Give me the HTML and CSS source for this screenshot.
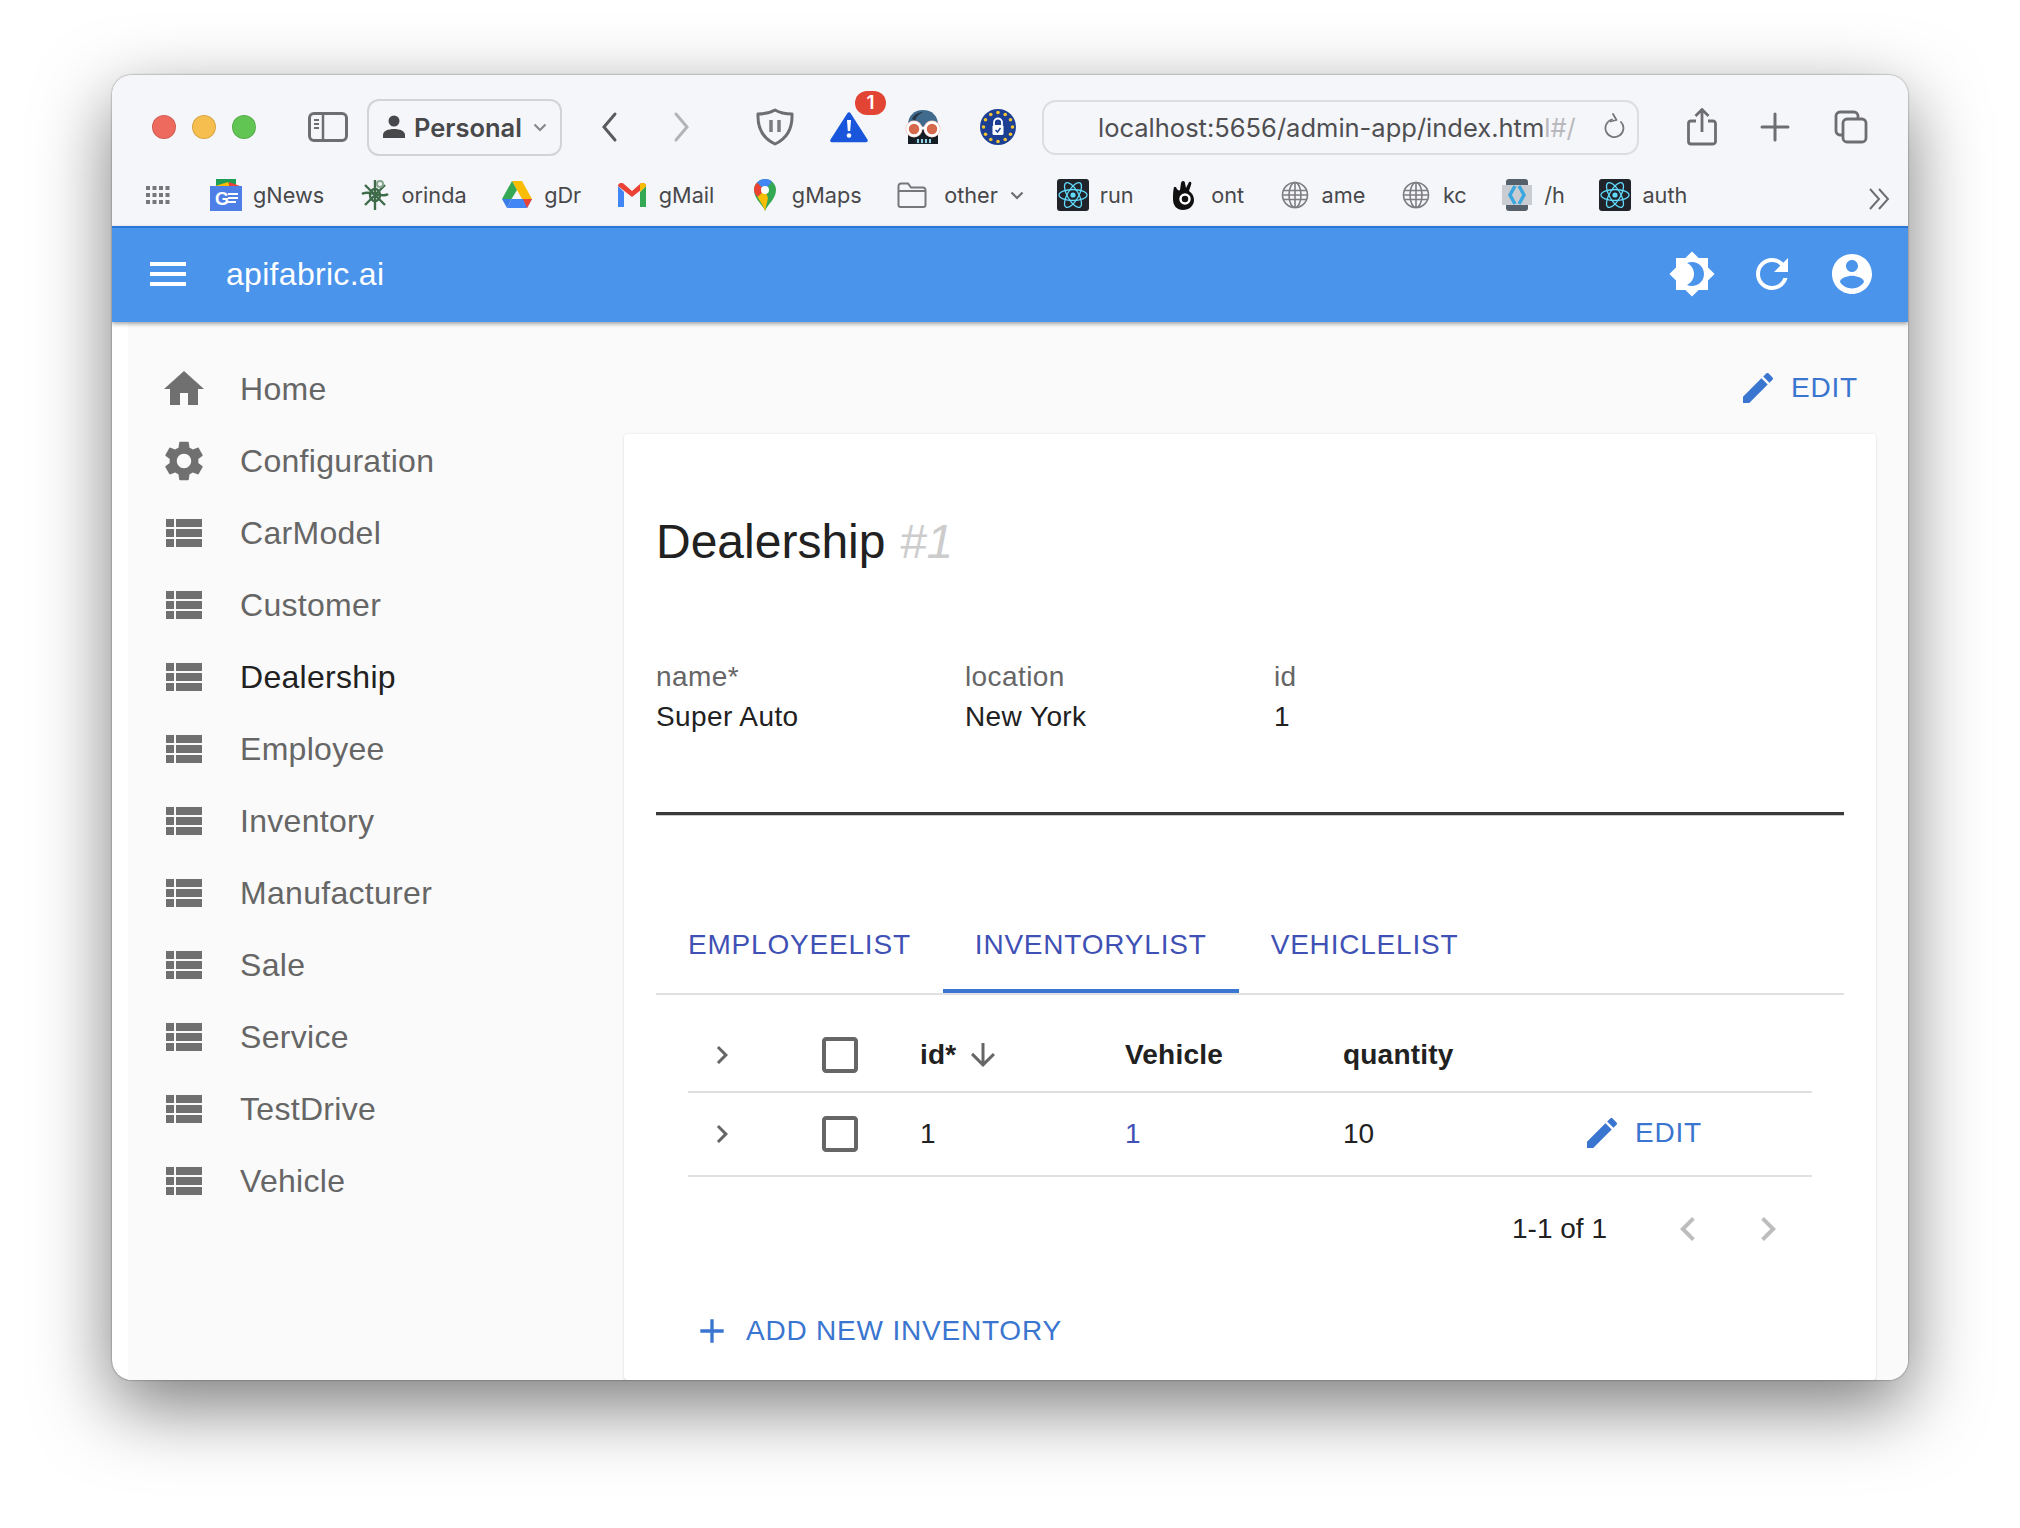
FILE: index.html
```html
<!DOCTYPE html>
<html lang="en">
<head>
  <meta charset="UTF-8" />
  <title>apifabric.ai</title>
  <link rel="stylesheet" href="styles.css">
</head>
<body>

  <svg class="defs" width="0" height="0">
    <symbol id="i-list" viewBox="0 0 24 24"><path d="M3 14h4v-4H3v4zm0 5h4v-4H3v4zM3 9h4V5H3v4zm5 5h13v-4H8v4zm0 5h13v-4H8v4zM8 5v4h13V5H8z"/></symbol>
    <symbol id="i-edit" viewBox="0 0 24 24"><path d="M3 17.25V21h3.75L17.81 9.94l-3.75-3.75L3 17.25zM20.71 7.04c.39-.39.39-1.02 0-1.41l-2.34-2.34c-.39-.39-1.02-.39-1.41 0l-1.83 1.83 3.75 3.75 1.83-1.83z"/></symbol>
    <symbol id="i-right" viewBox="0 0 24 24"><path d="M10 6 8.59 7.41 13.17 12l-4.58 4.59L10 18l6-6z"/></symbol>
    <symbol id="i-left" viewBox="0 0 24 24"><path d="M15.41 7.41 14 6l-6 6 6 6 1.41-1.41L10.83 12z"/></symbol>
    <symbol id="i-box" viewBox="0 0 24 24"><path d="M19 5v14H5V5h14m0-2H5c-1.1 0-2 .9-2 2v14c0 1.1.9 2 2 2h14c1.1 0 2-.9 2-2V5c0-1.1-.9-2-2-2z"/></symbol>
    <symbol id="i-globe" viewBox="0 0 28 28"><g fill="none" stroke="#7d7d82" stroke-width="1.6"><circle cx="14" cy="14" r="12.5"/><ellipse cx="14" cy="14" rx="6" ry="12.5"/><path d="M14 1.5v25M2.5 9.5h23M2.5 18.5h23M1.5 14h25"/></g></symbol>
    <symbol id="i-react" viewBox="0 0 32 32"><rect width="32" height="32" rx="3" fill="#20232a"/><g fill="none" stroke="#61dafb" stroke-width="1.3"><ellipse cx="16" cy="16" rx="14" ry="5.5"/><ellipse cx="16" cy="16" rx="14" ry="5.5" transform="rotate(60 16 16)"/><ellipse cx="16" cy="16" rx="14" ry="5.5" transform="rotate(120 16 16)"/></g><circle cx="16" cy="16" r="2.6" fill="#61dafb"/></symbol>
  </svg>

  <div class="window">

    <header class="toolbar">
      <div class="toolbar-main">
        <span class="light light-red"></span>
        <span class="light light-yellow"></span>
        <span class="light light-green"></span>

        <svg class="tb-sidebar" width="40" height="30" viewBox="0 0 40 30"><rect x="1.5" y="1.5" width="37" height="27" rx="4.5" fill="none" stroke="#6e6e72" stroke-width="3"/><path d="M15 2v26" stroke="#6e6e72" stroke-width="2.5"/><path d="M6 8h5M6 12h5M6 16h5" stroke="#6e6e72" stroke-width="2"/></svg>

        <div class="profile">
          <svg width="22" height="24" viewBox="0 0 22 24"><circle cx="11" cy="6" r="5.5" fill="#48484a"/><path d="M0 23v-3c0-4 5-6 11-6s11 2 11 6v3z" fill="#48484a"/></svg>
          <span class="profile-name">Personal</span>
          <svg width="14" height="9" viewBox="0 0 14 9"><path d="M1.5 1.5 7 7l5.5-5.5" fill="none" stroke="#88888c" stroke-width="2.2"/></svg>
        </div>

        <svg class="tb-back" width="24" height="32" viewBox="0 0 24 32"><path d="M17 3 6 16l11 13" fill="none" stroke="#5b5b5f" stroke-width="3" stroke-linecap="round"/></svg>
        <svg class="tb-forward" width="24" height="32" viewBox="0 0 24 32"><path d="M7 3l11 13L7 29" fill="none" stroke="#b4b4b8" stroke-width="3" stroke-linecap="round"/></svg>

        <svg class="tb-shield" width="38" height="38" viewBox="0 0 38 38"><path d="M19 2c5 3 11 4 17 4 .5 13-4 24-17 30C6 30 1.500 19 2 6c6 0 12-1 17-4z" fill="none" stroke="#6e6e72" stroke-width="3" stroke-linejoin="round"/><path d="M15 12v12M23 12v12" stroke="#7c7c80" stroke-width="3.500"/></svg>

        <div class="tb-alert">
          <svg width="38" height="32" viewBox="0 0 38 32"><path d="M19 3 2 29.500h34z" fill="#1a56db" stroke="#1a56db" stroke-width="3.500" stroke-linejoin="round"/><path d="M17 9h4l-.8 11h-2.400z" fill="#fff"/><circle cx="19" cy="24.500" r="2.300" fill="#fff"/></svg>
          <span class="alert-badge">1</span>
        </div>

        <svg class="tb-goggles" width="38" height="34" viewBox="0 0 38 34"><path d="M4 34V15C4 6 10 0 19 0s15 6 15 15v19z" fill="#406b8d"/><path d="M8 9c2-5 7-7 11-7-4 2-7 5-8 9z" fill="#24384a"/><path d="M4 20h30v14H4z" fill="#141c24"/><path d="M11 29h16v5H11z" fill="#1c2730"/><path d="M14 29v4M18 29v4M22 29v4M26 29v4" stroke="#8fd0e0" stroke-width="2"/><circle cx="10" cy="19" r="8.500" fill="#f3c9bd"/><circle cx="28" cy="19" r="8.500" fill="#f3c9bd"/><circle cx="10" cy="19" r="6.500" fill="#d6694c" stroke="#fff" stroke-width="2.500"/><circle cx="28" cy="19" r="6.500" fill="#d6694c" stroke="#fff" stroke-width="2.500"/><path d="M16 18h6" stroke="#fff" stroke-width="2.500"/></svg>

        <svg class="tb-eu" width="36" height="36" viewBox="0 0 36 36"><circle cx="18" cy="18" r="18" fill="#1c3f94"/><g fill="#f4c430"><circle cx="18" cy="3.500" r="1.800"/><circle cx="25.200" cy="5.500" r="1.800"/><circle cx="30.500" cy="10.800" r="1.800"/><circle cx="32.500" cy="18" r="1.800"/><circle cx="30.500" cy="25.200" r="1.800"/><circle cx="25.200" cy="30.500" r="1.800"/><circle cx="18" cy="32.500" r="1.800"/><circle cx="10.800" cy="30.500" r="1.800"/><circle cx="5.500" cy="25.200" r="1.800"/><circle cx="3.500" cy="18" r="1.800"/><circle cx="5.500" cy="10.800" r="1.800"/><circle cx="10.800" cy="5.500" r="1.800"/></g><path d="M14 16.500v-3a4 4 0 0 1 8 0v3" fill="none" stroke="#fff" stroke-width="1.800"/><rect x="12.500" y="16" width="11" height="10" rx="1.500" fill="#fff"/><path d="M15.500 21l2 2 3-4" fill="none" stroke="#1c3f94" stroke-width="1.500"/></svg>

        <div class="url-bar">
          <span class="url-text">localhost:5656/admin-app/index.htm<span class="url-fade">l#/</span></span>
          <svg width="22" height="28" viewBox="0 0 22 28"><path d="M8 6.500a9 9 0 1 0 9 2.500" fill="none" stroke="#77777b" stroke-width="1.800" stroke-linecap="round"/><path d="M9 1l3.500 6-6 1.500" fill="none" stroke="#77777b" stroke-width="1.800" stroke-linecap="round" stroke-linejoin="round"/></svg>
        </div>

        <svg class="tb-share" width="30" height="38" viewBox="0 0 30 38"><path d="M9 13H4a2.500 2.500 0 0 0-2.500 2.500v18A2.500 2.500 0 0 0 4 36h22a2.500 2.500 0 0 0 2.500-2.500v-18A2.500 2.500 0 0 0 26 13h-5M15 24V2M8.500 8 15 1.500 21.500 8" fill="none" stroke="#6e6e72" stroke-width="2.800"/></svg>
        <svg class="tb-plus" width="32" height="32" viewBox="0 0 32 32"><path d="M16 3v26M3 16h26" stroke="#6e6e72" stroke-width="3" stroke-linecap="round"/></svg>
        <svg class="tb-tabs" width="34" height="34" viewBox="0 0 34 34"><path d="M8 25H6a4 4 0 0 1-4-4V6a4 4 0 0 1 4-4h14a4 4 0 0 1 4 4v2" fill="none" stroke="#6e6e72" stroke-width="2.800"/><rect x="9" y="9" width="23" height="23" rx="4" fill="none" stroke="#6e6e72" stroke-width="2.800"/></svg>
      </div>

      <nav class="bookmarks">
        <svg class="bm-grid" width="24" height="18" viewBox="0 0 24 18"><g fill="#77777b"><rect width="4" height="4"/><rect x="6.500" width="4" height="4"/><rect x="13" width="4" height="4"/><rect x="19.500" width="4" height="4"/><rect y="7" width="4" height="4"/><rect x="6.500" y="7" width="4" height="4"/><rect x="13" y="7" width="4" height="4"/><rect x="19.500" y="7" width="4" height="4"/><rect y="14" width="4" height="4"/><rect x="6.500" y="14" width="4" height="4"/><rect x="13" y="14" width="4" height="4"/><rect x="19.500" y="14" width="4" height="4"/></g></svg>

        <a class="bookmark">
          <svg width="32" height="32" viewBox="0 0 32 32"><rect x="6" y="0" width="20" height="8" fill="#1f9d55"/><path d="M2 8l16-5 2 5z" fill="#fbbc04"/><path d="M19 3l11 4v2H19z" fill="#ea4335"/><rect y="7" width="32" height="25" fill="#4d7fe6"/><text x="5" y="26" class="news-g">G</text><path d="M18 15h10M18 19h10M18 23h8" stroke="#fff" stroke-width="2.200"/></svg>
          gNews
        </a>
        <a class="bookmark">
          <svg width="30" height="32" viewBox="0 0 30 32"><g fill="none" stroke="#3f6b4a" stroke-width="2.400"><path d="M15 1v30M2 15c6-5 20 5 26 0M5 6l20 20M25 6 5 26"/><ellipse cx="15" cy="16" rx="5" ry="6"/></g><circle cx="20" cy="5" r="3" fill="none" stroke="#86a58c" stroke-width="2"/></svg>
          orinda
        </a>
        <a class="bookmark">
          <svg width="30" height="28" viewBox="0 0 30 28"><path d="M10 0h10l10 18H20z" fill="#fbbc04"/><path d="M5 27l4.500-9H30l-5 9z" fill="#4285f4"/><path d="M0 18 10 0l5 9-5.500 9z" fill="#34a853"/><path d="M0 18h9.500L5 27z" fill="#3b7de8"/><path d="M25 27l5-9h-9z" fill="#ea4335"/></svg>
          gDr
        </a>
        <a class="bookmark">
          <svg width="28" height="24" viewBox="0 0 28 24"><path d="M0 3v21h6V9z" fill="#4285f4"/><path d="M22 9v15h6V3z" fill="#34a853"/><path d="M0 3c0-3 4-4 6-2l8 7 8-7c2-2 6-1 6 2l-14 11z" fill="#ea4335"/><path d="M22 1c2-2 6-1 6 2l-6 6z" fill="#fbbc04"/></svg>
          gMail
        </a>
        <a class="bookmark">
          <svg width="22" height="32" viewBox="0 0 22 32"><path d="M11 32c-2-6-11-12-11-21a11 11 0 0 1 22 0c0 9-9 15-11 21z" fill="#34a853"/><path d="M3 3.500 11 11 3.500 18C1 15 0 13 0 11c0-3 1-5.500 3-7.500z" fill="#ea4335"/><path d="M3 3.500A11 11 0 0 1 18 2.500L11 11z" fill="#4285f4"/><path d="M3.500 18 11 11l3 8-3 13c-1-4-4.500-9-7.500-14z" fill="#fbbc04"/><circle cx="11" cy="11" r="4" fill="#fff"/></svg>
          gMaps
        </a>
        <a class="bookmark bm-folder">
          <svg width="30" height="26" viewBox="0 0 30 26"><path d="M1.500 4A2.500 2.500 0 0 1 4 1.500h7l3 4h12A2.500 2.500 0 0 1 28.500 8v15a2 2 0 0 1-2 2H3.500a2 2 0 0 1-2-2zM1.500 9h27" fill="none" stroke="#77777b" stroke-width="2"/></svg>
          other
          <svg class="bm-chevron" width="14" height="9" viewBox="0 0 14 9"><path d="M1.500 1.500 7 7l5.500-5.500" fill="none" stroke="#6e6e72" stroke-width="2.200"/></svg>
        </a>
        <a class="bookmark"><svg width="32" height="32"><use href="#i-react"/></svg>run</a>
        <a class="bookmark">
          <svg width="26" height="32" viewBox="0 0 26 32"><path d="M5 8c1 3 3 4 4 3l1-7c1-3 4-2 4 0l1 5 3-6c2-1 3 1 2 3l-2 6c3 2 5 5 5 9 0 6-5 10-11 10S2 27 2 20c0-4 0-8 1-12z" fill="#111"/><circle cx="14" cy="20" r="4.500" fill="none" stroke="#fff" stroke-width="2.500"/></svg>
          ont
        </a>
        <a class="bookmark"><svg width="28" height="28"><use href="#i-globe"/></svg>ame</a>
        <a class="bookmark"><svg width="28" height="28"><use href="#i-globe"/></svg>kc</a>
        <a class="bookmark">
          <svg width="30" height="32" viewBox="0 0 30 32"><rect x="4" y="0" width="22" height="32" rx="3" fill="#56606a"/><rect y="6" width="30" height="20" fill="#c9ccd0"/><path d="M13 7 8 16l5 9M17 7l5 9-5 9" fill="none" stroke="#3ba7e0" stroke-width="3.500"/></svg>
          /h
        </a>
        <a class="bookmark"><svg width="32" height="32"><use href="#i-react"/></svg>auth</a>
        <svg class="bm-more" width="22" height="24" viewBox="0 0 22 24"><path d="M2 2l9 10-9 10M11 2l9 10-9 10" fill="none" stroke="#6e6e72" stroke-width="2"/></svg>
      </nav>
    </header>

    <div class="app-bar">
      <svg class="icon-48 app-menu" viewBox="0 0 24 24"><path d="M3 18h18v-2H3v2zm0-5h18v-2H3v2zm0-7v2h18V6H3z"/></svg>
      <span class="app-title">apifabric.ai</span>
      <div class="app-actions">
        <svg class="icon-48" viewBox="0 0 24 24"><path d="M20 8.690V4h-4.690L12 .690 8.690 4H4v4.690L.690 12 4 15.310V20h4.690L12 23.310 15.310 20H20v-4.690L23.310 12 20 8.690zM12 18c-.890 0-1.740-.200-2.500-.550C11.560 16.500 13 14.420 13 12s-1.440-4.500-3.500-5.450C10.260 6.200 11.110 6 12 6c3.310 0 6 2.690 6 6s-2.690 6-6 6z"/></svg>
        <svg class="icon-48" viewBox="0 0 24 24"><path d="M17.650 6.350C16.200 4.900 14.210 4 12 4c-4.420 0-7.990 3.580-7.990 8s3.570 8 7.990 8c3.730 0 6.840-2.550 7.730-6h-2.080c-.820 2.330-3.040 4-5.650 4-3.310 0-6-2.690-6-6s2.690-6 6-6c1.660 0 3.140.690 4.220 1.780L13 11h7V4l-2.350 2.350z"/></svg>
        <svg class="icon-48" viewBox="0 0 24 24"><path d="M12 2C6.480 2 2 6.480 2 12s4.480 10 10 10 10-4.480 10-10S17.520 2 12 2zm0 3c1.660 0 3 1.340 3 3s-1.340 3-3 3-3-1.340-3-3 1.340-3 3-3zm0 14.200c-2.500 0-4.710-1.280-6-3.220.030-1.990 4-3.080 6-3.080 1.990 0 5.970 1.090 6 3.080-1.290 1.940-3.500 3.220-6 3.220z"/></svg>
      </div>
    </div>

    <div class="content">
      <aside class="sidebar">
        <a class="menu-item">
          <svg class="icon-48" viewBox="0 0 24 24"><path d="M10 20v-6h4v6h5v-8h3L12 3 2 12h3v8z"/></svg>
          Home
        </a>
        <a class="menu-item">
          <svg class="icon-48" viewBox="0 0 24 24"><path d="M19.140 12.940c.040-.300.060-.610.060-.940 0-.320-.020-.640-.070-.940l2.030-1.580c.180-.140.230-.410.120-.610l-1.920-3.320c-.120-.220-.370-.290-.590-.220l-2.390.960c-.500-.380-1.030-.700-1.620-.940l-.360-2.540c-.040-.240-.240-.410-.480-.410h-3.840c-.240 0-.430.170-.47.410l-.360 2.540c-.590.240-1.130.570-1.620.940l-2.390-.960c-.220-.080-.470 0-.590.220L2.740 8.870c-.120.210-.080.470.12.610l2.030 1.580c-.050.300-.090.630-.090.940s.020.640.07.940l-2.030 1.580c-.180.140-.230.410-.12.610l1.920 3.320c.120.220.370.290.590.220l2.390-.960c.500.380 1.030.700 1.620.940l.360 2.540c.050.240.240.410.480.410h3.840c.240 0 .440-.170.470-.410l.360-2.540c.590-.240 1.130-.560 1.620-.940l2.390.960c.220.080.470 0 .590-.22l1.920-3.320c.120-.220.070-.470-.120-.610l-2.010-1.580zM12 15.600c-1.980 0-3.600-1.620-3.600-3.600s1.620-3.600 3.600-3.600 3.600 1.620 3.600 3.600-1.620 3.600-3.600 3.600z"/></svg>
          Configuration
        </a>
        <a class="menu-item"><svg class="icon-48"><use href="#i-list"/></svg>CarModel</a>
        <a class="menu-item"><svg class="icon-48"><use href="#i-list"/></svg>Customer</a>
        <a class="menu-item menu-active"><svg class="icon-48"><use href="#i-list"/></svg>Dealership</a>
        <a class="menu-item"><svg class="icon-48"><use href="#i-list"/></svg>Employee</a>
        <a class="menu-item"><svg class="icon-48"><use href="#i-list"/></svg>Inventory</a>
        <a class="menu-item"><svg class="icon-48"><use href="#i-list"/></svg>Manufacturer</a>
        <a class="menu-item"><svg class="icon-48"><use href="#i-list"/></svg>Sale</a>
        <a class="menu-item"><svg class="icon-48"><use href="#i-list"/></svg>Service</a>
        <a class="menu-item"><svg class="icon-48"><use href="#i-list"/></svg>TestDrive</a>
        <a class="menu-item"><svg class="icon-48"><use href="#i-list"/></svg>Vehicle</a>
      </aside>

      <main class="main">
        <div class="top-actions">
          <a class="edit-btn"><svg class="icon-40"><use href="#i-edit"/></svg>EDIT</a>
        </div>

        <section class="card">
          <h1 class="card-title">Dealership <em>#1</em></h1>

          <div class="fields">
            <div>
              <div class="field-label">name*</div>
              <div class="field-value">Super Auto</div>
            </div>
            <div>
              <div class="field-label">location</div>
              <div class="field-value">New York</div>
            </div>
            <div>
              <div class="field-label">id</div>
              <div class="field-value">1</div>
            </div>
          </div>

          <hr class="divider" />

          <div class="tabs">
            <a class="tab">EMPLOYEELIST</a>
            <a class="tab tab-active">INVENTORYLIST</a>
            <a class="tab">VEHICLELIST</a>
          </div>

          <div class="grid-wrap">
            <table class="grid">
              <colgroup>
                <col class="col-expand">
                <col class="col-check">
                <col class="col-id">
                <col class="col-vehicle">
                <col class="col-qty">
                <col class="col-action">
              </colgroup>
              <thead>
                <tr>
                  <th><svg class="icon-36 icon-grey"><use href="#i-right"/></svg></th>
                  <th><svg class="icon-48 icon-grey"><use href="#i-box"/></svg></th>
                  <th><span class="th-sort">id* <svg class="icon-36 icon-grey" viewBox="0 0 24 24"><path d="M20 12l-1.410-1.410L13 16.170V4h-2v12.170l-5.580-5.590L4 12l8 8 8-8z"/></svg></span></th>
                  <th>Vehicle</th>
                  <th>quantity</th>
                  <th></th>
                </tr>
              </thead>
              <tbody>
                <tr>
                  <td><svg class="icon-36 icon-grey"><use href="#i-right"/></svg></td>
                  <td><svg class="icon-48 icon-grey"><use href="#i-box"/></svg></td>
                  <td>1</td>
                  <td><a class="cell-link">1</a></td>
                  <td>10</td>
                  <td><a class="edit-btn"><svg class="icon-40"><use href="#i-edit"/></svg>EDIT</a></td>
                </tr>
              </tbody>
            </table>

            <div class="pagination">
              <span class="page-count">1-1 of 1</span>
              <svg class="icon-48 icon-disabled"><use href="#i-left"/></svg>
              <svg class="icon-48 icon-disabled"><use href="#i-right"/></svg>
            </div>

            <a class="add-btn">
              <svg class="icon-40" viewBox="0 0 24 24"><path d="M19 13h-6v6h-2v-6H5v-2h6V5h2v6h6v2z"/></svg>
              ADD NEW INVENTORY
            </a>
          </div>
        </section>
      </main>
    </div>
  </div>

</body>
</html>
```

FILE: styles.css
```css
body {
  margin: 0;
  padding: 75px 0 0 112px;
  height: 1453px;
  overflow: hidden;
  background-color: #ffffff;
  font-family: "Liberation Sans", Arial, sans-serif;
  color: #212121;
}

a {
  text-decoration: none;
}

.defs {
  position: absolute;
}

.window {
  width: 1796px;
  height: 1305px;
  display: flex;
  flex-direction: column;
  border-radius: 20px;
  background-color: #ffffff;
  overflow: hidden;
  box-shadow: 0 26px 75px rgba(0, 0, 0, 0.52), 0 0 2px rgba(0, 0, 0, 0.55);
}

/* browser chrome */

.toolbar {
  height: 151px;
  flex-shrink: 0;
  background-color: #f5f6fa;
  font-family: Inter, "Liberation Sans", sans-serif;
  display: flex;
  flex-direction: column;
}

.toolbar-main {
  height: 106px;
  box-sizing: border-box;
  padding: 0 0 2px 40px;
  display: flex;
  align-items: center;
}

.light {
  width: 24px;
  height: 24px;
  border-radius: 50%;
  margin-right: 16px;
  box-sizing: border-box;
  border: 1px solid rgba(0, 0, 0, 0.12);
}

.light-red { background-color: #ee6a5f; }
.light-yellow { background-color: #f6be4f; }
.light-green { background-color: #61c554; }

.tb-sidebar { margin-left: 36px; }

.profile {
  margin-left: 19px;
  width: 195px;
  height: 57px;
  box-sizing: border-box;
  border: 2px solid #d2d3d6;
  border-radius: 12px;
  padding-left: 14px;
  display: flex;
  align-items: center;
  color: #48484a;
}

.profile-name {
  margin-left: 9px;
  margin-right: 11px;
  font-size: 25.5px;
  font-weight: 600;
}

.tb-back { margin-left: 36px; }
.tb-forward { margin-left: 47px; }
.tb-shield { margin-left: 63px; }
.tb-alert { margin-left: 36px; position: relative; height: 32px; width: 38px; }
.tb-goggles { margin-left: 36px; }
.tb-eu { margin-left: 38px; }

.tb-alert svg {
  display: block;
}

.alert-badge {
  position: absolute;
  left: 25px;
  top: -20px;
  width: 31px;
  height: 24px;
  border-radius: 12px;
  background-color: #e34534;
  color: #ffffff;
  font-size: 19px;
  font-weight: 600;
  line-height: 24px;
  text-align: center;
}

.url-bar {
  margin-left: 26px;
  width: 597px;
  height: 55px;
  box-sizing: border-box;
  border: 2px solid #dcdde1;
  border-radius: 14px;
  padding: 0 11px 0 54px;
  display: flex;
  align-items: center;
  justify-content: space-between;
}

.url-text {
  font-size: 25.5px;
  color: #4f4f52;
  white-space: nowrap;
}

.url-fade {
  color: #b9b9bd;
}

.tb-share { margin-left: 48px; }
.tb-plus { margin-left: 42px; }
.tb-tabs { margin-left: 43px; }

.bookmarks {
  height: 30px;
  margin-top: -1px;
  padding: 0 18px 16px 34px;
  display: flex;
  align-items: center;
}

.bm-grid {
  margin-right: 40px;
}

.bookmark {
  display: flex;
  align-items: center;
  gap: 11px;
  margin-right: 34.5px;
  font-size: 21.7px;
  color: #48484a;
  white-space: nowrap;
}

/* favicons sit in a 32px slot, narrow ones centred */
.bookmark > svg:first-child {
  width: 32px;
  flex-shrink: 0;
}

.bm-folder > svg:first-child {
  margin-right: 5px;
}

.bm-folder {
  margin-right: 33px;
}

.news-g {
  font-family: "Liberation Sans", sans-serif;
  font-size: 18px;
  font-weight: 700;
  fill: #ffffff;
}

.bm-chevron {
  margin-left: 1px;
}

.bm-more {
  margin-left: auto;
  margin-top: 8px;
}

/* app bar */

.app-bar {
  height: 96px;
  flex-shrink: 0;
  box-sizing: border-box;
  border-top: 2px solid #2a77d6;
  background-color: #4a94ec;
  color: #ffffff;
  display: flex;
  align-items: center;
  padding: 0 32px 2px;
  box-shadow: 0 2px 4px rgba(0, 0, 0, 0.35);
  position: relative;
}

.app-bar svg {
  fill: #ffffff;
}

.app-title {
  margin-left: 34px;
  font-size: 32px;
  letter-spacing: 0.3px;
}

.app-actions {
  margin-left: auto;
  display: flex;
  gap: 32px;
}

.icon-48 {
  width: 48px;
  height: 48px;
  flex-shrink: 0;
}

.icon-40 {
  width: 40px;
  height: 40px;
  flex-shrink: 0;
}

.icon-36 {
  width: 36px;
  height: 36px;
  flex-shrink: 0;
}

.icon-grey {
  fill: #666666;
}

.icon-disabled {
  fill: #bdbdbd;
}

/* page */

.content {
  flex: 1;
  display: flex;
  min-height: 0;
  margin-left: 16px;
  background-color: #fafafa;
}

.sidebar {
  width: 496px;
  flex-shrink: 0;
  padding-top: 31px;
  box-sizing: border-box;
}

.menu-item {
  height: 72px;
  padding-left: 32px;
  display: flex;
  align-items: center;
  gap: 32px;
  font-size: 32px;
  letter-spacing: 0.3px;
  color: #666666;
}

.menu-item svg {
  fill: #707070;
}

.menu-active {
  color: #212121;
}

.main {
  flex: 1;
  min-width: 0;
  padding-right: 32px;
}

.top-actions {
  height: 112px;
  box-sizing: border-box;
  padding: 20px 18px 0 0;
  display: flex;
  justify-content: flex-end;
  align-items: center;
}

.edit-btn {
  display: inline-flex;
  align-items: center;
  gap: 13px;
  font-size: 28px;
  letter-spacing: 0.8px;
  color: #3a75d0;
}

.edit-btn svg {
  fill: #3a75d0;
}

.card {
  height: 946px;
  box-sizing: border-box;
  padding: 0 32px;
  background-color: #ffffff;
  border-radius: 4px;
  box-shadow: 0 2px 2px rgba(0, 0, 0, 0.1), 0 0 3px rgba(0, 0, 0, 0.08);
}

.card-title {
  margin: 0;
  padding-top: 78px;
  font-size: 48px;
  line-height: 60px;
  font-weight: 400;
  color: #212121;
}

.card-title em {
  margin-left: 1px;
  color: #cccccc;
}

.fields {
  margin-top: 85px;
  display: grid;
  grid-template-columns: repeat(3, 309px);
  font-size: 28px;
  line-height: 40px;
  letter-spacing: 0.4px;
}

.field-label {
  color: #666666;
}

.field-value {
  color: #212121;
}

.divider {
  margin: 75px 0 0;
  border: none;
  height: 3px;
  background-color: #3a3a3a;
  box-shadow: 0 1px 0 #cccccc;
}

.tabs {
  margin-top: 82px;
  display: flex;
  border-bottom: 2px solid #e0e0e0;
}

.tab {
  height: 96px;
  box-sizing: border-box;
  padding: 0 32px;
  display: flex;
  align-items: center;
  font-size: 28px;
  letter-spacing: 0.8px;
  color: #3f51b5;
}

.tab-active {
  box-shadow: inset 0 -4px 0 #3a75d0;
}

.grid-wrap {
  padding: 22px 32px 0;
}

.grid {
  width: 100%;
  table-layout: fixed;
  border-collapse: collapse;
  font-size: 28px;
}

.col-expand { width: 102px; }
.col-check { width: 130px; }
.col-id { width: 205px; }
.col-vehicle { width: 218px; }
.col-qty { width: 239px; }

.grid th,
.grid td {
  padding: 0;
  text-align: left;
  border-bottom: 2px solid #e0e0e0;
  font-size: 28px;
}

.grid th {
  height: 75px;
  padding-top: 2px;
  box-sizing: border-box;
  font-weight: 700;
  letter-spacing: 0.2px;
  color: #212121;
}

.grid td {
  height: 82px;
}

.grid svg {
  display: block;
}

.grid th:first-child svg,
.grid td:first-child svg {
  margin-left: 16px;
}

.grid th:nth-child(2) svg,
.grid td:nth-child(2) svg {
  margin-left: 26px;
}

.grid td .edit-btn {
  margin-top: 4px;
}

.th-sort {
  display: flex;
  align-items: center;
  gap: 9px;
}

.cell-link {
  color: #3f51b5;
}

.pagination {
  height: 104px;
  display: flex;
  align-items: center;
  justify-content: flex-end;
  padding-right: 20px;
  font-size: 28px;
}

.page-count {
  margin-right: 57px;
}

.pagination svg + svg {
  margin-left: 32px;
}

.add-btn {
  margin-top: 26px;
  padding-left: 4px;
  height: 48px;
  display: flex;
  align-items: center;
  gap: 14px;
  font-size: 28px;
  letter-spacing: 0.8px;
  color: #3a75d0;
}

.add-btn svg {
  fill: #3a75d0;
}
```
